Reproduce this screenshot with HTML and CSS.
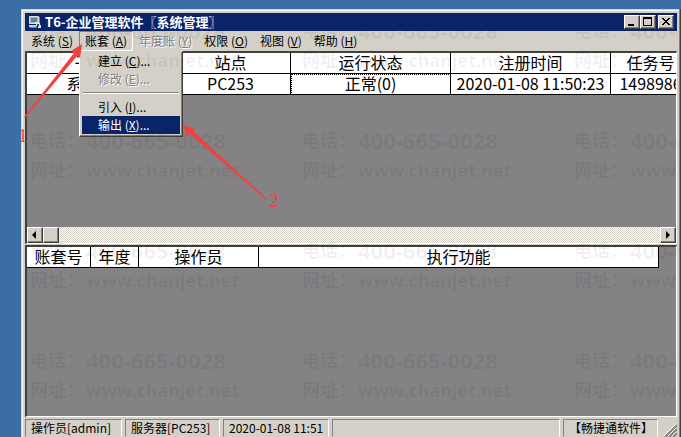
FILE: index.html
```html
<!DOCTYPE html>
<html lang="zh-CN">
<head>
    <meta charset="UTF-8">
    <meta name="viewport" content="width=device-width, initial-scale=1.0">
    <title>T6-企业管理软件〖系统管理〗</title>
    <link rel="stylesheet" href="styles.css">
</head>
<body>

    <div class="window">
        <!-- Title bar -->
        <header class="titlebar">
            <svg class="app-icon" viewBox="0 0 14 14" aria-hidden="true">
                <path d="M1.500 1.500h9v7h-9z" fill="#9db4bd" stroke="#e4e4e0"/>
                <path d="M3 3h6v4H3z" fill="#5f8791"/>
                <path d="M11 2h1v6h-1z" fill="#808080"/>
                <path d="M1 10h7v2H1z" fill="#d4d0c8"/>
                <path d="M2 12h7v1H2z" fill="#808080"/>
                <path d="M7 7h3v1h2v2h1v3h-3v-2H8V9H7z" fill="#e4e4e0"/>
                <path d="M9 9h2v2H9z" fill="#404040"/>
            </svg>
            <h1 class="title">T6-企业管理软件〖系统管理〗</h1>
            <div class="window-buttons">
                <button class="btn" aria-label="最小化">
                    <svg viewBox="0 0 12 10"><path d="M2 7h6v2H2z"/></svg>
                </button>
                <button class="btn" aria-label="最大化">
                    <svg viewBox="0 0 12 10"><path d="M1 0h9v9H1zM2 2v6h7V2z" fill-rule="evenodd"/></svg>
                </button>
                <button class="btn close" aria-label="关闭">
                    <svg viewBox="0 0 12 10"><path d="M2 1h2v1h1v1h2V2h1V1h2v1H9v1H8v1H7v1h1v1h1v1h1v1H8V7H7V6H5v1H4v1H2V7h1V6h1V5h1V4H4V3H3V2H2z"/></svg>
                </button>
            </div>
        </header>

        <!-- Menu bar -->
        <nav class="menubar">
            <button class="menu-title">系统 (<u>S</u>)</button>
            <div class="menu-wrap">
                <button class="menu-title open">账套 (<u>A</u>)</button>
                <div class="dropdown">
                    <button class="menu-item">建立 (<u>C</u>)...</button>
                    <button class="menu-item" disabled>修改 (<u>E</u>)...</button>
                    <hr class="separator">
                    <button class="menu-item">引入 (<u>I</u>)...</button>
                    <button class="menu-item selected">输出 (<u>X</u>)...</button>
                </div>
            </div>
            <button class="menu-title" disabled>年度账 (<u>Y</u>)</button>
            <button class="menu-title">权限 (<u>O</u>)</button>
            <button class="menu-title">视图 (<u>V</u>)</button>
            <button class="menu-title">帮助 (<u>H</u>)</button>
        </nav>

        <!-- Running subsystems -->
        <section class="pane pane-top">
            <table class="grid sessions">
                <colgroup>
                    <col class="col-system">
                    <col class="col-site">
                    <col class="col-status">
                    <col class="col-time">
                    <col class="col-task">
                </colgroup>
                <thead>
                    <tr><th>子系统</th><th>站点</th><th>运行状态</th><th>注册时间</th><th>任务号</th></tr>
                </thead>
                <tbody>
                    <tr><td>系统管理</td><td>PC253</td><td class="focused">正常(0)</td><td>2020-01-08 11:50:23</td><td>1498986</td></tr>
                </tbody>
            </table>
            <div class="scrollbar">
                <button class="scroll-btn" aria-label="向左">
                    <svg viewBox="0 0 12 12"><path d="M7 2v8L3 6z"/></svg>
                </button>
                <div class="thumb"></div>
                <div class="track"></div>
                <button class="scroll-btn" aria-label="向右">
                    <svg viewBox="0 0 12 12"><path d="M4 2v8l4-4z"/></svg>
                </button>
            </div>
        </section>

        <!-- Functions in use -->
        <section class="pane pane-bottom">
            <table class="grid tasks">
                <colgroup>
                    <col class="col-account">
                    <col class="col-year">
                    <col class="col-operator">
                    <col>
                </colgroup>
                <thead>
                    <tr><th>账套号</th><th>年度</th><th>操作员</th><th>执行功能</th></tr>
                </thead>
            </table>
        </section>

        <!-- Status bar -->
        <footer class="statusbar">
            <span class="status operator">操作员[admin]</span>
            <span class="status server">服务器[PC253]</span>
            <span class="status clock">2020-01-08 11:51</span>
            <span class="status message"></span>
            <span class="status brand">【畅捷通软件】</span>
            <svg class="grip" viewBox="0 0 16 18" aria-hidden="true">
                <path d="M4 18L16 6M8 18l8-8M12 18l4-4" stroke="#808080" stroke-width="2"/>
                <path d="M3 17L15 5M7 17l8-8M11 17l4-4" stroke="#fff"/>
            </svg>
        </footer>
    </div>

    <!-- Repeated contact watermark -->
    <div class="watermark" aria-hidden="true">
        <div class="mark"><span>电话：</span><span class="phone">400-665-0028</span><span>网址：</span><span>www.chanjet.net</span></div>
        <div class="mark"><span>电话：</span><span class="phone">400-665-0028</span><span>网址：</span><span>www.chanjet.net</span></div>
        <div class="mark"><span>电话：</span><span class="phone">400-665-0028</span><span>网址：</span><span>www.chanjet.net</span></div>
        <div class="mark"><span>电话：</span><span class="phone">400-665-0028</span><span>网址：</span><span>www.chanjet.net</span></div>
        <div class="mark"><span>电话：</span><span class="phone">400-665-0028</span><span>网址：</span><span>www.chanjet.net</span></div>
        <div class="mark"><span>电话：</span><span class="phone">400-665-0028</span><span>网址：</span><span>www.chanjet.net</span></div>
        <div class="mark"><span>电话：</span><span class="phone">400-665-0028</span><span>网址：</span><span>www.chanjet.net</span></div>
        <div class="mark"><span>电话：</span><span class="phone">400-665-0028</span><span>网址：</span><span>www.chanjet.net</span></div>
        <div class="mark"><span>电话：</span><span class="phone">400-665-0028</span><span>网址：</span><span>www.chanjet.net</span></div>
        <div class="mark"><span>电话：</span><span class="phone">400-665-0028</span><span>网址：</span><span>www.chanjet.net</span></div>
        <div class="mark"><span>电话：</span><span class="phone">400-665-0028</span><span>网址：</span><span>www.chanjet.net</span></div>
        <div class="mark"><span>电话：</span><span class="phone">400-665-0028</span><span>网址：</span><span>www.chanjet.net</span></div>
    </div>

    <!-- Red arrows and step numbers -->
    <svg class="steps" width="300" height="220" viewBox="0 0 300 220">
        <path d="M24 117L74 53L71 51L82 44L80 58L77 56L25 118z"/>
        <path d="M266 200L190 134L187 137L183 125L195 129L193 131L267 199z"/>
        <text x="18" y="142">1</text>
        <text x="269" y="207">2</text>
    </svg>

</body>
</html>
```
FILE: styles.css
```css
* {
    box-sizing: border-box;
}

body {
    margin: 0;
    padding: 9px 0 0 21px;
    height: 100vh;
    display: flex;
    position: relative;
    overflow: hidden;
    background-color: #3a6ea5;
    color: #000;
    font-family: "Noto Sans CJK SC", sans-serif;
    font-size: 12px;
}

button {
    font: inherit;
    color: inherit;
    margin: 0;
    padding: 0;
    border: none;
    background: none;
    white-space: nowrap;
}

svg {
    display: block;
}

/* Window frame */
.window {
    flex: 1;
    min-width: 0;
    display: flex;
    flex-direction: column;
    padding: 4px 4px 0 4px;
    background-color: #d4d0c8;
    box-shadow: inset -1px 0 #404040, inset -2px 0 #808080, inset 1px 1px #d4d0c8, inset 2px 2px #fff;
}

.titlebar {
    display: flex;
    align-items: center;
    height: 18px;
    padding: 0 3px;
    background-color: #0a246a;
    color: #fff;
    position: relative;
    z-index: 4; /* the watermark does not show on the title bar */
}

.app-icon {
    width: 14px;
    height: 14px;
}

.title {
    flex: 1;
    margin: 0 0 0 3px;
    font-size: 13px;
    line-height: 16px;
    font-weight: bold;
}

.window-buttons {
    display: flex;
}

.btn,
.scroll-btn,
.thumb {
    width: 16px;
    background-color: #d4d0c8;
    border: 1px solid;
    border-color: #fff #404040 #404040 #fff;
    box-shadow: inset -1px -1px #808080;
}

.btn {
    height: 14px;
    padding: 1px;
}

.btn svg {
    width: 12px;
    height: 10px;
}

.close {
    margin-left: 2px;
}

/* Menus */
.menubar {
    display: flex;
    height: 20px;
}

.menu-wrap {
    position: relative;
}

.menu-title {
    height: 20px;
    padding: 0 6px;
    line-height: 18px;
}

.menu-title.open {
    border: 1px solid;
    border-color: #808080 #fff #fff #808080;
    padding: 0 5px;
}

.menu-title:disabled,
.menu-item:disabled {
    color: #808080;
    text-shadow: 1px 1px #fff;
}

.dropdown {
    position: absolute;
    top: 100%;
    left: 0;
    z-index: 2;
    width: 104px;
    padding: 0 2px 2px;
    background-color: #d4d0c8;
    border: 1px solid;
    border-color: #d4d0c8 #404040 #404040 #fff;
    box-shadow: inset -1px -1px #808080;
}

.menu-item {
    display: block;
    width: 100%;
    height: 18px;
    padding: 0 16px;
    line-height: 18px;
    text-align: left;
}

.menu-item.selected {
    background-color: #0a246a;
    color: #fff;
}

.separator {
    height: 2px;
    margin: 4px 1px;
    border: none;
    border-top: 1px solid #808080;
    border-bottom: 1px solid #fff;
}

/* Panes */
.pane {
    display: flex;
    flex-direction: column;
    min-height: 0;
    overflow: hidden;
    background-color: #848284;
    border-top: 2px solid #404040;
    border-left: 2px solid #404040;
    border-right: 1px solid #fff;
    border-bottom: 1px solid #fff;
}

.pane-top {
    flex: 193 1 0;
    margin-bottom: 1px;
}

.pane-bottom {
    flex: 172 1 0;
}

.grid {
    table-layout: fixed;
    border-spacing: 0;
    background-color: #fff;
    font-size: 16px;
    line-height: 18px;
}

.grid th,
.grid td {
    height: 21px;
    padding: 0 0 2px;
    border-right: 1px solid #000;
    border-bottom: 1px solid #000;
    font-weight: normal;
    text-align: center;
    white-space: nowrap;
}

.grid .focused {
    outline: 1px dotted #000;
    outline-offset: -1px;
}

.sessions {
    width: 664px;
}

.col-system {
    width: 144px;
}

.col-site,
.col-operator {
    width: 120px;
}

.col-status,
.col-time {
    width: 160px;
}

.col-task {
    width: 80px;
}

.tasks {
    width: calc(100% - 17px);
}

.col-account {
    width: 64px;
}

.col-year {
    width: 48px;
}

.scrollbar {
    display: flex;
    height: 16px;
    margin-top: auto;
}

.scroll-btn {
    padding: 1px;
}

.scroll-btn svg {
    width: 12px;
    height: 12px;
}

.track {
    flex: 1;
    background: repeating-conic-gradient(#fff 0 25%, #d4d0c8 0 50%) 0 0 / 2px 2px;
}

/* Status bar */
.statusbar {
    display: flex;
    gap: 3px;
    height: 20px;
    padding-top: 2px;
}

.status {
    padding: 0 5px;
    border: 1px solid;
    border-color: #808080 #fff transparent #808080;
    line-height: 16px;
    white-space: nowrap;
}

.operator {
    width: 97px;
}

.server,
.brand {
    width: 95px;
}

.clock {
    width: 106px;
}

.message {
    flex: 1;
}

.grip {
    width: 16px;
    height: 18px;
    fill: none;
}

/* Watermark over the window, below the title bar */
.watermark {
    position: absolute;
    inset: 15px 4px 20px 30px;
    z-index: 3;
    display: grid;
    grid-template-columns: repeat(3, 272px);
    grid-auto-rows: 110px;
    overflow: hidden;
    pointer-events: none;
    color: rgba(0, 0, 0, 0.06);
    font-family: "Noto Sans", "Noto Sans CJK SC", sans-serif;
    font-size: 18px;
    font-weight: bold;
    line-height: 30px;
}

.mark {
    display: grid;
    grid-template-columns: 56px 1fr;
    grid-auto-rows: 30px;
    align-content: start;
    white-space: nowrap;
}

.phone {
    font-size: 22px;
}

/* Red arrows and step numbers */
.steps {
    position: absolute;
    top: 0;
    left: 0;
    z-index: 5;
    pointer-events: none;
    fill: #f04040;
    font-family: "Liberation Serif", serif;
    font-size: 19px;
}
```
